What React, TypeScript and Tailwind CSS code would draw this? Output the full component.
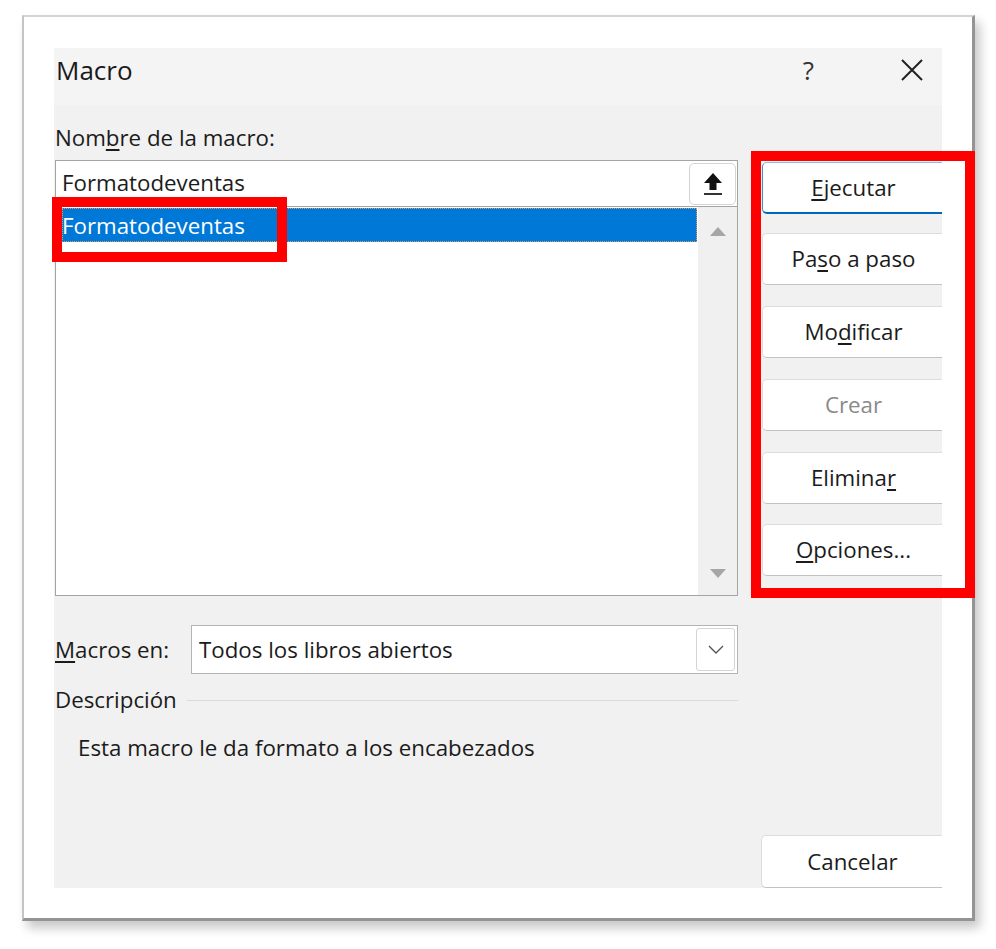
import React from 'react';

const font = { fontFamily: '"Open Sans", "Noto Sans", sans-serif' };

function UploadIcon() {
  return (
    <svg width="22" height="28" viewBox="0 0 22 28">
      <path d="M11 3 L20 13 L14.5 13 L14.5 20 L7.5 20 L7.5 13 L2 13 Z" fill="#111" />
      <rect x="2" y="23" width="18" height="2" fill="#333" />
    </svg>
  );
}

function Tri({ up }: { up?: boolean }) {
  return (
    <svg width="18" height="11" viewBox="0 0 18 11">
      <path d={up ? 'M9 1 L17 10 L1 10 Z' : 'M1 1 L17 1 L9 10 Z'} fill="#a6a6a6" />
    </svg>
  );
}

function DialogButton({
  children,
  primary,
  disabled,
  className = '',
}: {
  children: React.ReactNode;
  primary?: boolean;
  disabled?: boolean;
  className?: string;
}) {
  return (
    <div
      className={`w-[183px] h-[52px] shrink-0 flex items-center justify-center rounded-l-[5px] bg-white text-[22.3px] ${
        primary
          ? 'border border-[#8bbbe8] border-b-2 border-b-[#0067c0] border-l-[#3d8fd8]'
          : 'border border-[#dcdcdc] border-b-[#c2c2c2]'
      } ${disabled ? 'text-[#8a8a8a]' : 'text-[#1b1b1b]'} ${className}`}
    >
      {children}
    </div>
  );
}

export default function App() {
  return (
    <div className="relative w-[996px] h-[949px] bg-white overflow-hidden" style={font}>
      {/* picture frame */}
      <div className="ml-[22px] mt-[15px] w-[953px] h-[906px] bg-white border-l-2 border-t-2 border-l-[#c4c4c4] border-t-[#d4d4d4] border-r-[3px] border-b-[3px] border-r-[#949494] border-b-[#949494] shadow-[5px_7px_10px_rgba(0,0,0,0.22)] pl-[30px] pt-[31px]">
        {/* dialog */}
        <div className="w-[888px] h-[840px] bg-[#f1f1f1] flex flex-col overflow-hidden text-[#1b1b1b]">
          {/* title bar */}
          <div className="h-[57px] shrink-0 bg-[#f4f4f4] flex items-center pl-[2px] pb-[14px]">
            <span className="text-[26px] leading-none text-[#1a1a1a]">Macro</span>
            <span className="ml-auto text-[26px] leading-none text-[#333] mr-[86px]">?</span>
            <svg width="24" height="24" viewBox="0 0 24 24" className="mr-[18px]">
              <path d="M2 2 L22 22 M22 2 L2 22" stroke="#222" strokeWidth="2" />
            </svg>
          </div>

          {/* body */}
          <div className="flex-1 flex">
            {/* left column */}
            <div className="w-[683px] shrink-0 ml-[1px] flex flex-col">
              <div className="h-[55px] pt-[19px] leading-[28px] text-[22.3px]">
                Nom<span className="underline underline-offset-[3px]">b</span>re de la macro:
              </div>
              <div className="h-[46px] bg-white border border-b-0 border-[#a4a4a4] flex items-center">
                <span className="pl-[6px] text-[22.3px] leading-none flex-1">Formatodeventas</span>
                <div className="w-[47px] h-[42px] mt-[1px] mr-[1px] bg-white border border-[#d4d4d4] rounded-[5px] flex items-center justify-center">
                  <UploadIcon />
                </div>
              </div>
              <div className="h-[390px] bg-white border border-[#a4a4a4] flex">
                <div className="flex-1 pl-[6px] pt-[1px] pr-[1px]">
                  <div className="h-[34px] pt-[2px] bg-[#0078d7] outline-1 outline-dotted outline-[#d9a066] -outline-offset-1 flex items-center text-white text-[22.3px]">
                    Formatodeventas
                  </div>
                </div>
                <div className="w-[39px] bg-[#f0f0f0] flex flex-col items-center justify-between pt-[19px] pb-[16px]">
                  <Tri up />
                  <Tri />
                </div>
              </div>

              <div className="mt-[29px] h-[49px] flex items-center">
                <span className="w-[136px] text-[22.3px]">
                  <span className="underline underline-offset-[3px]">M</span>acros en:
                </span>
                <div className="flex-1 h-[49px] bg-white border border-[#b4b4b4] flex items-center">
                  <span className="pl-[7px] text-[22.3px] flex-1">Todos los libros abiertos</span>
                  <div className="w-[39px] h-[43px] mr-[2px] bg-white border border-[#d4d4d4] rounded-[3px] flex items-center justify-center">
                    <svg width="16" height="9" viewBox="0 0 16 9">
                      <path d="M1 1 L8 8 L15 1" stroke="#555" strokeWidth="1.4" fill="none" />
                    </svg>
                  </div>
                </div>
              </div>

              <div className="mt-[12px] flex items-center leading-[28px] text-[22.3px]">
                <span>Descripción</span>
                <div className="flex-1 ml-[10px] border-t border-[#dadada]" />
              </div>
              <div className="mt-[20px] pl-[23px] leading-[28px] text-[22.3px]">
                Esta macro le da formato a los encabezados
              </div>
            </div>

            {/* right column */}
            <div className="w-[180px] shrink-0 ml-[24px] flex flex-col">
              <DialogButton primary className="mt-[57px]">
                <span>
                  <span className="underline underline-offset-[3px]">E</span>jecutar
                </span>
              </DialogButton>
              <DialogButton className="mt-[19px]">
                <span>
                  Pa<span className="underline underline-offset-[3px]">s</span>o a paso
                </span>
              </DialogButton>
              <DialogButton className="mt-[21px]">
                <span>
                  Mo<span className="underline underline-offset-[3px]">d</span>ificar
                </span>
              </DialogButton>
              <DialogButton disabled className="mt-[21px]">
                Crear
              </DialogButton>
              <DialogButton className="mt-[21px]">
                <span>
                  Elimina<span className="underline underline-offset-[3px]">r</span>
                </span>
              </DialogButton>
              <DialogButton className="mt-[20px]">
                <span>
                  <span className="underline underline-offset-[3px]">O</span>pciones...
                </span>
              </DialogButton>
              <DialogButton className="mt-auto h-[53px] -ml-[1px]">Cancelar</DialogButton>
            </div>
          </div>
        </div>
      </div>

      {/* red highlight boxes */}
      <div className="absolute left-[52px] top-[197px] w-[235px] h-[65px] border-[10px] border-[#ff0000] pointer-events-none" />
      <div className="absolute left-[751px] top-[151px] w-[224px] h-[447px] border-[10px] border-[#ff0000] pointer-events-none" />
    </div>
  );
}
